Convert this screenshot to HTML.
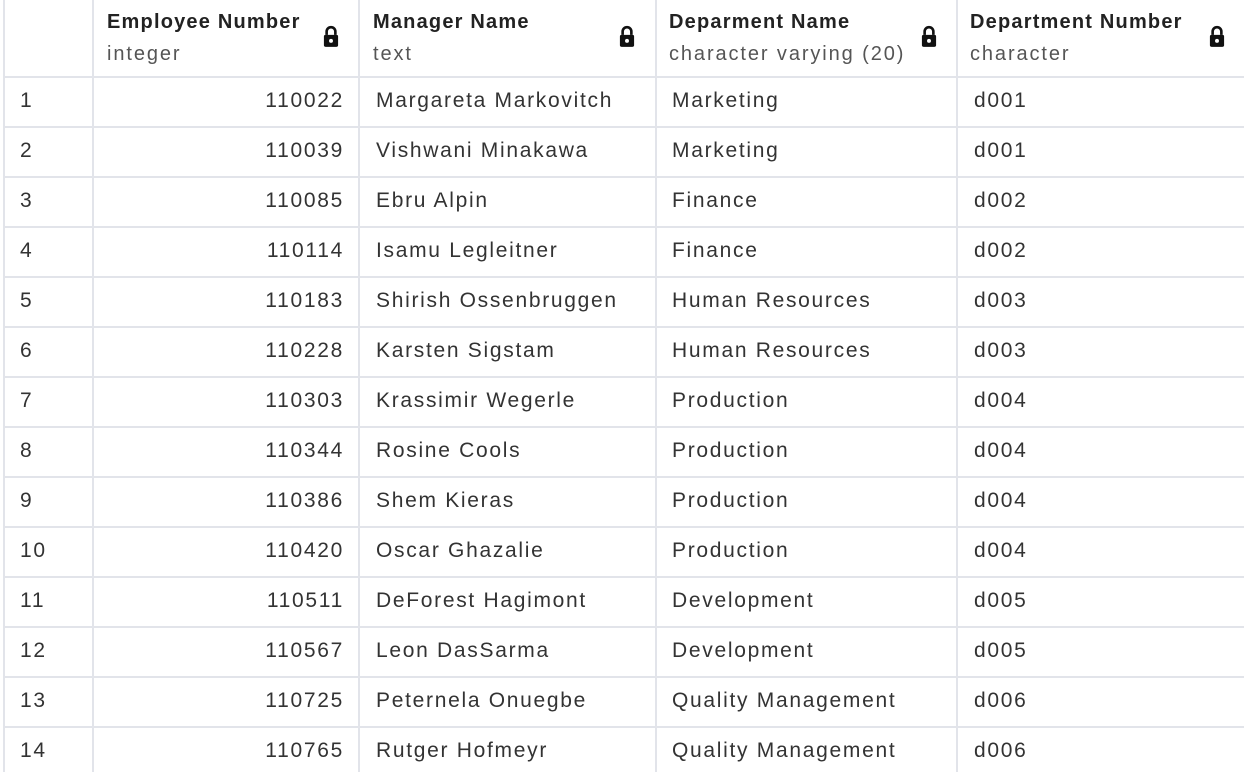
<!DOCTYPE html><html><head><style>
body{margin:0;width:1244px;height:772px;overflow:hidden;background:#fff;font-family:"Liberation Sans",sans-serif;color:#222;}
.v{position:absolute;top:0;height:772px;width:2px;background:#e2e4ea}
.h{position:absolute;left:3px;width:1241px;height:2px;background:#e2e4ea}
.t{position:absolute;font-size:21px;letter-spacing:1.7px;white-space:nowrap;color:#333;line-height:24px}
.hd{position:absolute;font-size:20px;letter-spacing:1.2px;font-weight:bold;color:#222;white-space:nowrap;line-height:22px}
.st{position:absolute;font-size:20px;letter-spacing:1.9px;color:#555;white-space:nowrap;line-height:22px}
.lk{position:absolute;top:25px}
</style></head><body>
<div class="v" style="left:3px"></div><div class="v" style="left:92px"></div><div class="v" style="left:358px"></div><div class="v" style="left:655px"></div><div class="v" style="left:956px"></div>
<div class="hd" style="left:107px;top:11px">Employee Number</div><div class="st" style="left:107px;top:43px">integer</div>
<div class="hd" style="left:373px;top:11px">Manager Name</div><div class="st" style="left:373px;top:43px">text</div>
<div class="hd" style="left:669px;top:11px">Deparment Name</div><div class="st" style="left:669px;top:43px">character varying (20)</div>
<div class="hd" style="left:970px;top:11px">Department Number</div><div class="st" style="left:970px;top:43px">character</div>
<svg class="lk" style="left:322px" width="18" height="24" viewBox="0 0 16 22"><path d="M4 9V6a4 4 0 0 1 8 0v3" fill="none" stroke="#111" stroke-width="2.4"/><rect x="1.5" y="9" width="13" height="11" rx="1.5" fill="#111"/><circle cx="8" cy="14.5" r="1.8" fill="#fff"/></svg>
<svg class="lk" style="left:618px" width="18" height="24" viewBox="0 0 16 22"><path d="M4 9V6a4 4 0 0 1 8 0v3" fill="none" stroke="#111" stroke-width="2.4"/><rect x="1.5" y="9" width="13" height="11" rx="1.5" fill="#111"/><circle cx="8" cy="14.5" r="1.8" fill="#fff"/></svg>
<svg class="lk" style="left:920px" width="18" height="24" viewBox="0 0 16 22"><path d="M4 9V6a4 4 0 0 1 8 0v3" fill="none" stroke="#111" stroke-width="2.4"/><rect x="1.5" y="9" width="13" height="11" rx="1.5" fill="#111"/><circle cx="8" cy="14.5" r="1.8" fill="#fff"/></svg>
<svg class="lk" style="left:1208px" width="18" height="24" viewBox="0 0 16 22"><path d="M4 9V6a4 4 0 0 1 8 0v3" fill="none" stroke="#111" stroke-width="2.4"/><rect x="1.5" y="9" width="13" height="11" rx="1.5" fill="#111"/><circle cx="8" cy="14.5" r="1.8" fill="#fff"/></svg>
<div id="rows"></div>
<script>
var d=[["110022","Margareta Markovitch","Marketing","d001"],["110039","Vishwani Minakawa","Marketing","d001"],["110085","Ebru Alpin","Finance","d002"],["110114","Isamu Legleitner","Finance","d002"],["110183","Shirish Ossenbruggen","Human Resources","d003"],["110228","Karsten Sigstam","Human Resources","d003"],["110303","Krassimir Wegerle","Production","d004"],["110344","Rosine Cools","Production","d004"],["110386","Shem Kieras","Production","d004"],["110420","Oscar Ghazalie","Production","d004"],["110511","DeForest Hagimont","Development","d005"],["110567","Leon DasSarma","Development","d005"],["110725","Peternela Onuegbe","Quality Management","d006"],["110765","Rutger Hofmeyr","Quality Management","d006"]];
var h="";for(var i=0;i<d.length;i++){var y=76+i*50;h+='<div class="h" style="top:'+y+'px"></div>';var ty=y+13;
h+='<div class="t" style="left:20px;top:'+ty+'px">'+(i+1)+'</div>';
h+='<div class="t" style="right:900px;top:'+ty+'px">'+d[i][0]+'</div>';
h+='<div class="t" style="left:376px;top:'+ty+'px">'+d[i][1]+'</div>';
h+='<div class="t" style="left:672px;top:'+ty+'px">'+d[i][2]+'</div>';
h+='<div class="t" style="left:974px;top:'+ty+'px">'+d[i][3]+'</div>';}
document.getElementById("rows").innerHTML=h;
</script>
</body></html>
